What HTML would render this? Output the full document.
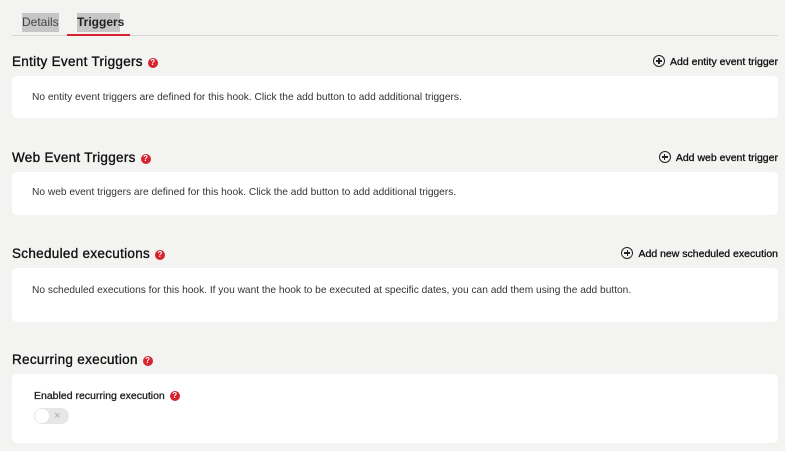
<!DOCTYPE html>
<html><head><style>
body{margin:0;background:#f3f3f2;font-family:"Liberation Sans",sans-serif;color:#222;width:785px;height:451px;overflow:hidden;position:relative}
.abs{position:absolute}
.tab{position:absolute;top:13px;height:19px;background:#c6c6c6;font-size:12px;line-height:19px;color:#444}
.title{position:absolute;left:12px;font-size:13.5px;font-weight:normal;letter-spacing:0.3px;color:#111;-webkit-text-stroke:0.35px #111}
.q{display:inline-block;width:10px;height:10px;border-radius:50%;background:#d8232f;color:#fff;font-size:8px;line-height:10px;text-align:center;font-weight:bold;vertical-align:1px;margin-left:5px;-webkit-text-stroke:0}
.box{position:absolute;left:12px;width:766px;background:#fff;border-radius:5px}
.msg{position:absolute;left:32px;font-size:10.2px;color:#333}
.add{position:absolute;right:7px;font-size:10.5px;color:#111;-webkit-text-stroke:0.3px #111}
.plus{display:inline-block;width:10px;height:10px;border:1.2px solid #222;border-radius:50%;position:relative;vertical-align:-2px;margin-right:5px;-webkit-text-stroke:0}
.plus:before{content:"";position:absolute;left:2px;top:4.4px;width:6px;height:1.2px;background:#222}
.plus:after{content:"";position:absolute;top:2px;left:4.4px;height:6px;width:1.2px;background:#222}
</style></head><body>
<div class="tab" style="left:22px;width:37px">Details</div>
<div class="tab" style="left:77px;width:43px;font-weight:bold;color:#222">Triggers</div>
<div class="abs" style="left:12px;top:35px;width:766px;height:1px;background:#d6d6d6"></div>
<div class="abs" style="left:67px;top:34px;width:63px;height:2px;background:#d8232f"></div>

<div class="title" style="top:54px">Entity Event Triggers<span class="q">?</span></div>
<div class="add" style="top:55px"><span class="plus"></span>Add entity event trigger</div>
<div class="box" style="top:76px;height:42px"></div>
<div class="msg" style="top:92px">No entity event triggers are defined for this hook. Click the add button to add additional triggers.</div>

<div class="title" style="top:150px">Web Event Triggers<span class="q">?</span></div>
<div class="add" style="top:151px"><span class="plus"></span>Add web event trigger</div>
<div class="box" style="top:172px;height:43px"></div>
<div class="msg" style="top:187px">No web event triggers are defined for this hook. Click the add button to add additional triggers.</div>

<div class="title" style="top:246px">Scheduled executions<span class="q">?</span></div>
<div class="add" style="top:247px"><span class="plus"></span>Add new scheduled execution</div>
<div class="box" style="top:268px;height:54px"></div>
<div class="msg" style="top:285px">No scheduled executions for this hook. If you want the hook to be executed at specific dates, you can add them using the add button.</div>

<div class="title" style="top:352px">Recurring execution<span class="q">?</span></div>
<div class="box" style="top:374px;height:69px"></div>
<div class="abs" style="left:34px;top:390px;font-size:10.5px;color:#222;-webkit-text-stroke:0.3px #222">Enabled recurring execution<span class="q">?</span></div>
<div class="abs" style="left:34px;top:408px;width:35px;height:16px;border-radius:8px;background:#e6e6e6"></div>
<div class="abs" style="left:35px;top:409px;width:14px;height:14px;border-radius:50%;background:#fff"></div>
<div class="abs" style="left:54px;top:408px;font-size:11px;color:#aaa;line-height:16px">×</div>
</body></html>
